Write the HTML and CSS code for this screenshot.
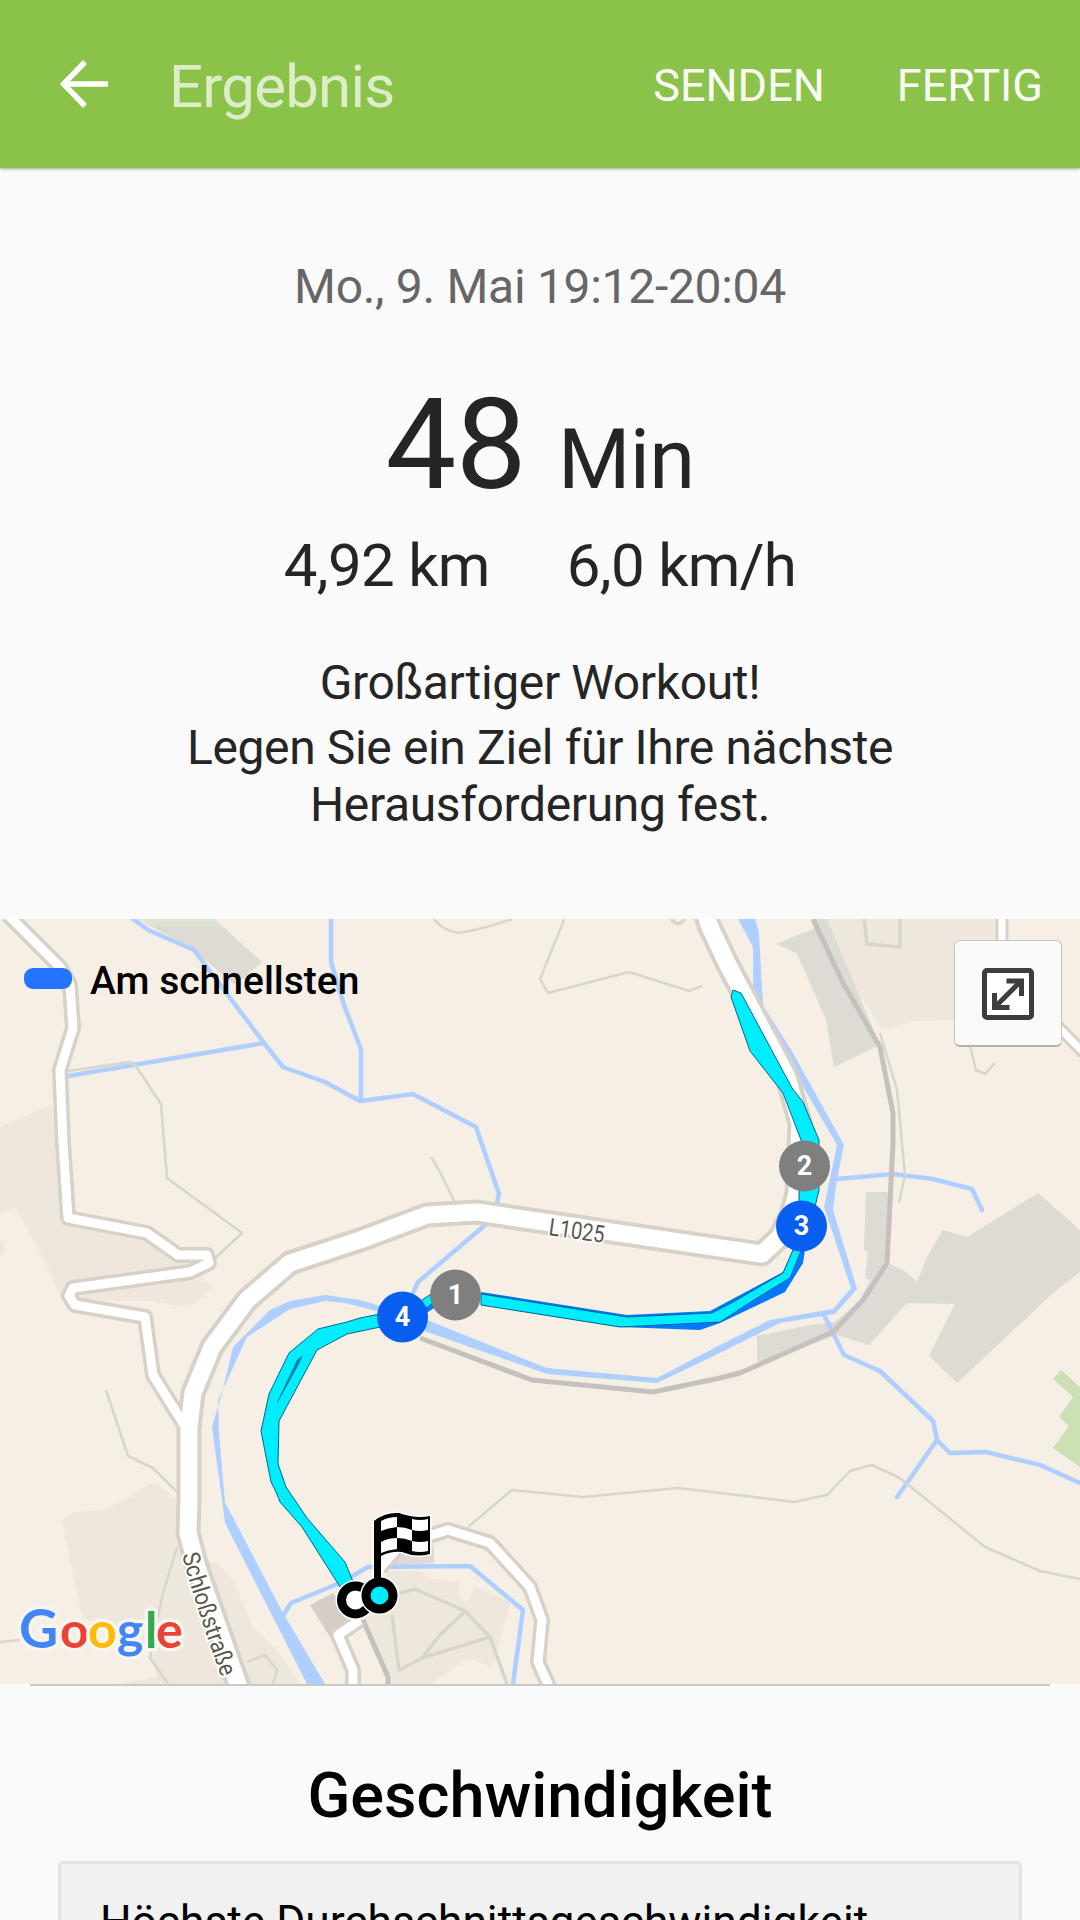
FILE: index.html
```html
<!DOCTYPE html>
<html lang="de">

<head>
    <meta charset="utf-8">
    <meta name="viewport" content="width=device-width, initial-scale=1.0">
    <title>Ergebnis</title>
    <link rel="stylesheet" href="styles.css">
</head>

<body>
    <header class="app-bar">
        <svg class="back" viewBox="0 0 48 48">
            <path d="M48 24H4M25 2L3.5 24L25 46" />
        </svg>
        <h1 class="title">Ergebnis</h1>
        <nav class="actions">
            <a>SENDEN</a>
            <a>FERTIG</a>
        </nav>
    </header>

    <section class="summary">
        <p class="date">Mo., 9. Mai 19:12-20:04</p>
        <p class="duration"><span class="value">48</span><span class="unit">Min</span></p>
        <div class="stats">
            <span>4,92 km</span>
            <span>6,0 km/h</span>
        </div>
        <p class="message">Großartiger Workout!</p>
        <p class="message goal">Legen Sie ein Ziel für Ihre nächste<br>Herausforderung fest.</p>
    </section>

    <section class="map">
        <svg class="map-canvas" viewBox="0 919 1080 765">
            <!-- land use -->
            <g class="land">
                <path d="M0 1127L52 1104L66 1220L145 1234L180 1258L200 1275L212 1288L195 1304L180 1306L150 1301L62 1300L48 1268L16 1208L0 1213Z" />
                <path d="M0 1237L6 1250L0 1255Z" />
                <path d="M62 1520L73 1512L103 1510L127 1499L143 1487L155 1483L177 1500L177 1533L200 1560L217 1563L233 1580L253 1627L277 1650L300 1684H117L157 1677L150 1650L82 1617Z" />
                <path d="M812 919H996V1005L955 1020L915 1021L882 1030Z" />
                <path d="M390 1570L423 1572L427 1578L460 1583L458 1597L468 1602L475 1587L510 1602L493 1667L467 1658L432 1684H388L360 1620Z" />
            </g>
            <g class="built">
                <path d="M150 926H222L262 962L235 985L205 960L194 949Z" />
                <path d="M776 944L815 928L812 919H827L880 1045L834 1067L826 1020L800 960L796 953Z" />
                <path d="M866 1192H889L887 1263L903 1270L917 1282L927 1257L943 1230L967 1237L1038 1193L1080 1230V1272L1053 1293L957 1383L929 1356L955 1304L907 1303L869 1345L837 1335L757 1362V1336L810 1325L835 1322L860 1300L870 1280L865 1278L868 1252L864 1250Z" />
                <path d="M385 1558L400 1545L434 1545V1563L390 1566Z" />
                <path class="dark" d="M310 1605L333 1593L352 1620L330 1637Z" />
            </g>
            <path class="pale-green" d="M138 919H215L222 926H150Z" />
            <path class="green" d="M1061 1370L1080 1387V1467L1053 1448L1069 1426L1059 1417L1073 1397L1053 1379Z" />

            <!-- water -->
            <g class="river">
                <path d="M738 919H755L759 933L763 1005L793 1053L844 1145L836 1185L833 1210L857 1289L835 1314L780 1323L720 1353L657 1383L547 1374L427 1332L380 1312L345 1303L325 1301L290 1309L247 1337L218 1400L219 1433L225 1503L228 1508L283 1613L325 1684H307L225 1523L223 1507L212 1427L222 1393L233 1347L270 1310L290 1301L325 1295L360 1300L427 1320L547 1368L657 1378L720 1345L770 1320L833 1309L851 1288L824 1207L837 1145L770 1030L753 990V947Z" />
            </g>
            <g class="stream">
                <path d="M133 919L148 930L194 950L264 1043L283 1067L325 1082L360 1101L413 1094L476 1127L499 1194L495 1210" />
                <path d="M484 1226L418 1282L412 1295" />
                <path d="M331 919V962L345 1008L361 1049V1101" />
                <path d="M68 1076L264 1043" />
                <path d="M284 1614L291 1603L340 1583L368 1567L470 1566L523 1610L513 1684" />
                <path d="M837 1179L893 1174L933 1179L972 1189L982 1210" />
                <path d="M824 1315L844 1355L880 1371L933 1421L937 1440L950 1453L986 1452L1040 1465L1080 1483" />
                <path d="M937 1440L897 1497" />
            </g>

            <!-- footpaths -->
            <g class="path">
                <path d="M68 1071L130 1062L136 1066L161 1104L167 1178L242 1233L215 1258" />
                <path d="M434 919Q442 930 458 933Q480 930 512 919" />
                <path d="M564 919L562 925L540 979L548 993L629 972L689 991L702 986" />
                <path d="M431 1157L440 1172L455 1203" />
                <path d="M970 1046L976 1070L985 1074L995 1063" />
                <path d="M880 1033L897 1090L905 1175L899 1203" />
                <path d="M106 1390L128 1456L153 1468L177 1492" />
                <path d="M177 1547L162 1597L150 1658L168 1684" />
                <path d="M247 1662L265 1655L277 1670L273 1684" />
                <path d="M0 1642L20 1640" />
                <path d="M468 1527L512 1490L583 1497L678 1488L720 1493L794 1502L827 1495L850 1471L872 1465L900 1478L985 1547L1040 1571L1080 1579" />
            </g>
            <g class="path wide">
                <path d="M864 919L867 944L900 947V919" />
                <path d="M400 1593L415 1589L465 1611L490 1637L507 1684" />
                <path d="M392 1615L399 1670L422 1658L490 1637M422 1658L440 1635L465 1611" />
                <path d="M671 919Q678 928 685 919" />
            </g>

            <!-- railway -->
            <path class="rail" d="M813 919L843 983L880 1047L893 1113V1143L887 1263L863 1300L833 1332L740 1373L720 1378L653 1392L532 1380L420 1338" />
            <path class="rail" d="M363 1620L388 1677V1684" />

            <!-- roads: casing first, then the white fill -->
            <g class="casing">
                <path class="minor" d="M8 915L60 967L70 985L73 1028L60 1070L63 1143L68 1218L147 1233L178 1255H207L209 1263L190 1272L73 1288L69 1296L75 1305L145 1317L153 1375L186 1428" />
                <path class="small" d="M1002 915V950L1040 1008L1084 1053" />
                <path class="minor" d="M380 1568L400 1545L448 1530L490 1543L530 1587L542 1620L538 1662L552 1693" />
                <path class="minor" d="M360 1620L338 1635L353 1670V1690" />
                <path class="major" d="M705 912L709 925L727 963L787 1077L800 1123L797 1193L791 1215L780 1237L762 1254L720 1248L477 1212L427 1215L360 1240L290 1263L247 1300L212 1347L193 1393L189 1427V1500L188 1533L197 1567L240 1690" />
            </g>
            <g class="road">
                <path class="minor" d="M8 915L60 967L70 985L73 1028L60 1070L63 1143L68 1218L147 1233L178 1255H207L209 1263L190 1272L73 1288L69 1296L75 1305L145 1317L153 1375L186 1428" />
                <path class="small" d="M1002 915V950L1040 1008L1084 1053" />
                <path class="minor" d="M380 1568L400 1545L448 1530L490 1543L530 1587L542 1620L538 1662L552 1693" />
                <path class="minor" d="M360 1620L338 1635L353 1670V1690" />
                <path class="major" d="M705 912L709 925L727 963L787 1077L800 1123L797 1193L791 1215L780 1237L762 1254L720 1248L477 1212L427 1215L360 1240L290 1263L247 1300L212 1347L193 1393L189 1427V1500L188 1533L197 1567L240 1690" />
            </g>

            <!-- street names -->
            <text class="street" transform="translate(548 1235) rotate(8)" textLength="56" lengthAdjust="spacingAndGlyphs">L1025</text>
            <path id="street-line" class="guide" d="M182 1555Q197 1612 227 1692" />
            <text class="street" textLength="129" lengthAdjust="spacingAndGlyphs"><textPath href="#street-line" textLength="129" lengthAdjust="spacingAndGlyphs">Schloßstraße</textPath></text>

            <!-- workout track -->
            <path class="fastest" d="M481 1292L627 1315L710 1311L783 1272L795 1245L805 1250L803 1263L785 1292L720 1323L700 1330L620 1327L481 1305ZM405 1316L440 1292V1304L425 1314Z" />
            <g class="track">
                <path d="M481 1294L627 1317L712 1313L735 1301L783 1273L793 1250L802 1248L790 1278L757 1298L720 1322L620 1327L481 1305Z" />
                <path d="M731 997L733 990L741 993L792 1088L803 1102L819 1140V1190L813 1215H799V1190L801 1140L783 1093L750 1051Z" />
                <path d="M405 1312L425 1298L440 1288V1298L422 1311Z" />
                <path d="M385 1313L360 1318L347 1322L318 1329L289 1353L269 1394L261 1431L271 1482L276 1492L280 1502L302 1527L342 1590L354 1584L345 1562L307 1518L286 1487L278 1464L279 1421L317 1350L347 1334L385 1326Z" />
            </g>
            <path class="track-gap" d="M303 1355L297 1360L278 1400L277 1404L299 1364Z" />

            <!-- start and finish -->
            <circle class="halo" cx="355.500" cy="1600" r="18.500" />
            <circle class="start" cx="355.500" cy="1600" r="14" />
            <path class="halo" d="M374 1590V1521Q385 1512 399 1513Q416 1519 430 1516V1554Q416 1558 402 1552Q391 1551 381 1556V1590Z" />
            <circle class="halo" cx="379.500" cy="1595.500" r="18" />
            <path d="M374 1590V1521Q385 1512 399 1513Q416 1519 430 1516V1554Q416 1558 402 1552Q391 1551 381 1556V1590Z" />
            <g class="checks">
                <path d="M381 1521Q388 1517 397 1517V1527Q388 1528 381 1531Z" />
                <path d="M381 1542Q388 1538 397 1538V1549Q388 1550 381 1553Z" />
                <path d="M397 1527Q405 1527 412 1530V1541Q405 1538 397 1538Z" />
                <path d="M412 1519Q420 1521 428 1519V1530Q420 1532 412 1530Z" />
                <path d="M412 1541Q420 1543 428 1541V1551Q420 1553 412 1551Z" />
            </g>
            <circle cx="379.500" cy="1595.500" r="18" />
            <circle class="finish-dot" cx="379.500" cy="1595.500" r="9" />

            <!-- kilometre markers -->
            <g class="marker out">
                <circle cx="455.500" cy="1295" r="25.500" />
                <text x="455.500" y="1303.500">1</text>
                <circle cx="804.500" cy="1166" r="25.500" />
                <text x="804.500" y="1175">2</text>
            </g>
            <g class="marker back-way">
                <circle cx="801.500" cy="1226" r="25.500" />
                <text x="801.500" y="1234.500">3</text>
                <circle cx="402.500" cy="1317" r="25.500" />
                <text x="402.500" y="1325.500">4</text>
            </g>

            <text class="google" x="19 60 88 117 145 156" y="1648"><tspan class="g-blue big">G</tspan><tspan class="g-red">o</tspan><tspan class="g-yellow">o</tspan><tspan class="g-blue">g</tspan><tspan class="g-green">l</tspan><tspan class="g-red">e</tspan></text>
        </svg>

        <div class="legend">
            <span class="swatch"></span>
            <span>Am schnellsten</span>
        </div>

        <button class="expand">
            <svg viewBox="0 0 52 52">
                <rect x="2.500" y="2.500" width="47" height="47" rx="2.500" />
                <path d="M14 38L38 14M24.500 13H39.500V28M12.500 25V39.500H27.500" />
            </svg>
        </button>
    </section>

    <section class="speed">
        <h2>Geschwindigkeit</h2>
        <div class="card">Höchste Durchschnittsgeschwindigkeit</div>
    </section>
</body>

</html>
```
FILE: styles.css
```css
html,
body {
    height: 1920px;
    margin: 0;
    overflow: hidden;
}

body {
    width: 1080px;
    background: #fafafa;
    color: #252525;
    font-family: Roboto, sans-serif;
}

p,
h1,
h2 {
    margin: 0;
    font-weight: 400;
}

/* App bar */
.app-bar {
    position: relative;
    display: flex;
    align-items: center;
    box-sizing: border-box;
    height: 168px;
    padding: 0 37px 0 60px;
    background: #8bc34a;
    box-shadow: 0 1px 3px rgba(0, 0, 0, 0.35);
    color: #fff;
}

.back {
    width: 48px;
    height: 48px;
    fill: none;
    stroke: #fff;
    stroke-width: 5.5;
}

.title {
    margin-left: 61px;
    padding-top: 6px;
    font-size: 60px;
    line-height: 70px;
    letter-spacing: -0.8px;
    color: #dcedc8;
}

.actions {
    display: flex;
    gap: 72px;
    margin-left: auto;
    padding-top: 4px;
    font-size: 45px;
    line-height: 54px;
    color: #f9fcf5;
}

/* Summary */
.summary {
    box-sizing: border-box;
    height: 751px;
    padding-top: 91px;
    text-align: center;
}

.date {
    font-size: 48px;
    line-height: 56px;
    letter-spacing: -0.3px;
    color: #666;
}

.duration {
    display: flex;
    align-items: baseline;
    justify-content: center;
    gap: 32px;
    height: 148px;
    margin-top: 56px;
    line-height: 148px;
    letter-spacing: -0.6px;
}

.value {
    font-size: 126px;
}

.unit {
    font-size: 83px;
}

.stats {
    display: flex;
    justify-content: center;
    gap: 77px;
    margin-top: 12px;
    font-size: 60px;
    line-height: 70px;
    letter-spacing: -0.7px;
}

.message {
    margin-top: 53px;
    font-size: 48px;
    line-height: 57px;
    letter-spacing: -0.36px;
}

.goal {
    margin-top: 8px;
}

/* Map */
.map {
    position: relative;
    height: 765px;
    background: #f6efe5;
}

.map-canvas {
    display: block;
    width: 1080px;
    height: 765px;
}

.land {
    fill: #eee7dd;
}

.built {
    fill: #dedad4;
}

.dark {
    fill: #d5cec6;
}

.pale-green {
    fill: #dce4d3;
}

.green {
    fill: #cddfb5;
}

.river {
    fill: #aecfff;
}

.stream,
.path,
.rail,
.casing,
.road,
.guide {
    fill: none;
    stroke-linejoin: round;
}

.guide {
    stroke: none;
}

.stream {
    stroke: #aecfff;
    stroke-width: 4.5;
    stroke-linecap: round;
}

.path {
    stroke: #dad5ca;
    stroke-width: 2.5;
}

.path.wide {
    stroke-width: 3.5;
}

.rail {
    stroke: #c6c1be;
    stroke-width: 5;
}

.casing {
    stroke: #d7d1c7;
}

.casing .major {
    stroke-width: 25;
}

.casing .minor {
    stroke-width: 16;
}

.casing .small {
    stroke-width: 13;
}

.road {
    stroke: #fff;
}

.road .major {
    stroke-width: 17;
}

.road .minor {
    stroke-width: 9;
}

.road .small {
    stroke-width: 7;
}

.street {
    font-size: 24px;
    fill: #5a564d;
    stroke: #fff;
    stroke-width: 4;
    paint-order: stroke;
}

.fastest {
    fill: #0078ff;
}

.track {
    fill: #00ecff;
    stroke: #08658c;
    stroke-width: 1;
}

.track-gap {
    fill: #0780a5;
}

.start {
    fill: #fff;
    stroke: #000;
    stroke-width: 9;
}

.halo {
    fill: #fff;
    stroke: #fff;
    stroke-width: 3;
}

.checks {
    fill: #fff;
}

.finish-dot {
    fill: #00ecff;
}

.marker text {
    fill: #fff;
    font-size: 27px;
    font-weight: 700;
    text-anchor: middle;
}

.out {
    fill: #7f7f7f;
}

.back-way {
    fill: #075eef;
}

.google {
    font-family: Lato, sans-serif;
    font-size: 50px;
    font-weight: 700;
    stroke: #f8f5f0;
    stroke-width: 7;
    stroke-linejoin: round;
    paint-order: stroke;
}

.big {
    font-size: 54px;
}

.g-blue {
    fill: #4285f4;
}

.g-red {
    fill: #ea4335;
}

.g-yellow {
    fill: #fbbc05;
}

.g-green {
    fill: #34a853;
}

.legend {
    position: absolute;
    top: 39px;
    left: 24px;
    display: flex;
    align-items: center;
    gap: 18px;
    font-size: 39px;
    font-weight: 500;
    line-height: 46px;
    color: #000;
}

.swatch {
    width: 48px;
    height: 21px;
    margin-bottom: 5px;
    border-radius: 9px;
    background: #2474ff;
}

.expand {
    position: absolute;
    top: 21px;
    left: 954px;
    display: flex;
    align-items: center;
    justify-content: center;
    width: 108px;
    height: 107px;
    padding: 1px 0 0;
    border: 1px solid #c9c5bf;
    border-bottom: 2px solid #b5b2ae;
    border-radius: 6px;
    background: #fafafa;
}

.expand svg {
    width: 52px;
    height: 52px;
    fill: #fff;
    stroke: #3d3d3d;
    stroke-width: 5;
}

.expand path {
    fill: none;
}

/* Speed */
.speed {
    margin: 0 30px;
    padding-top: 75px;
    border-top: 2px solid #c9c9c9;
    color: #000;
}

.speed h2 {
    font-size: 63px;
    font-weight: 500;
    line-height: 70px;
    text-align: center;
}

.card {
    height: 200px;
    margin: 30px 28px 0 28px;
    padding: 30px 39px;
    border: 3px solid #e3e3e3;
    border-radius: 5px;
    background: #f1f1f1;
    font-size: 44.3px;
    line-height: 57px;
}
```
